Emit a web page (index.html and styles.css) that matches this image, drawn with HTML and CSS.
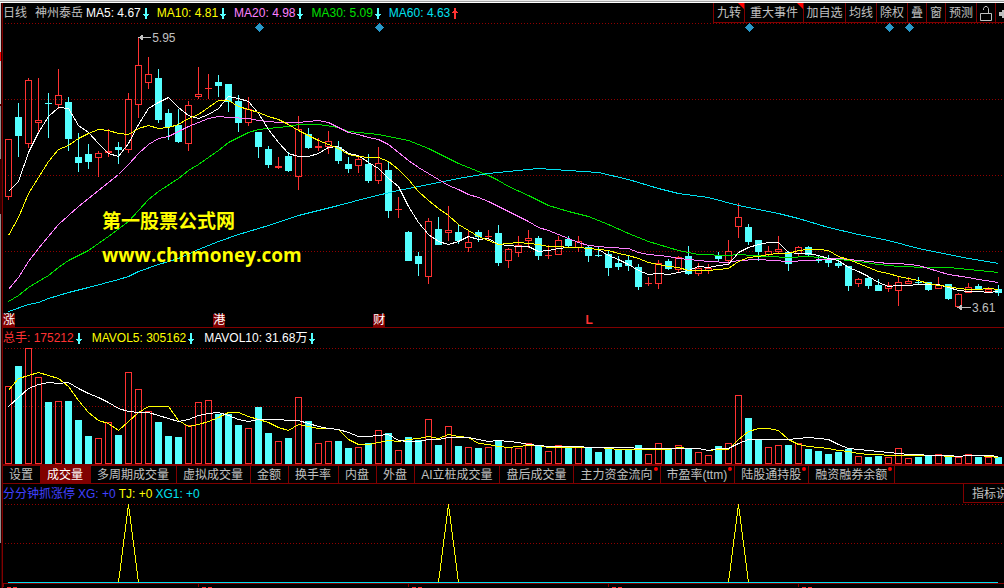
FILE: index.html
```
<!DOCTYPE html>
<html lang="zh-CN">
<head>
<meta charset="utf-8">
<title>神州泰岳 日线</title>
<link rel="stylesheet" href="styles.css">
</head>
<body>
<svg class="symbols" aria-hidden="true">
  <symbol id="down" viewBox="0 0 6 11"><path d="M2 0H4V6H6V7H5V8H4V11H2V8H1V7H0V6H2Z"/></symbol>
  <symbol id="up" viewBox="0 0 6 11"><path d="M2 11H4V5H6V4H5V3H4V0H2V3H1V4H0V5H2Z"/></symbol>
</svg>
<div class="top-strip"></div>
<div class="workspace">
  <div class="side-strip"></div>
  <main class="panels">
    <header class="bar">
      <span class="name">日线</span>
      <span class="name">神州泰岳</span>
      <div class="readings">
        <span class="reading white">MA5: 4.67<svg class="arrow"><use href="#down"/></svg></span>
        <span class="reading yellow">MA10: 4.81<svg class="arrow"><use href="#down"/></svg></span>
        <span class="reading violet">MA20: 4.98<svg class="arrow"><use href="#down"/></svg></span>
        <span class="reading green">MA30: 5.09<svg class="arrow"><use href="#down"/></svg></span>
        <span class="reading aqua">MA60: 4.63<svg class="arrow rise"><use href="#up"/></svg></span>
      </div>
      <nav class="tools">
        <button class="tool two flag">九转</button>
        <button class="tool four flag">重大事件</button>
        <button class="tool three">加自选</button>
        <button class="tool two">均线</button>
        <button class="tool two">除权</button>
        <button class="tool one">叠</button>
        <button class="tool one">窗</button>
        <button class="tool two">预测</button>
        <button class="tool one" aria-label="锁定"><svg class="lock" viewBox="0 0 12 15"><path d="M.5 7.500H11.500V14.500H.5Z M3.500 4V2.500L5 .5H7L8.500 2.500V7.500"/></svg></button>
        <button class="tool half" aria-label="展开"><svg class="more" viewBox="0 0 5 8"><path d="M0 2H3V0H5V8H3V6H0Z"/></svg></button>
      </nav>
    </header>

    <section class="plot price">
      <svg id="price" class="chart" viewBox="2 23 1002 304" preserveAspectRatio="none"></svg>
      <span class="mark high">5.95</span>
      <span class="mark low">3.61</span>
      <p class="watermark"><span>第一股票公式网</span><span>www.chnmoney.com</span></p>
      <span class="tag at-rise">涨</span>
      <span class="tag at-port">港</span>
      <span class="tag at-money">财</span>
      <span class="tag letter">L</span>
    </section>

    <header class="bar divided">
      <div class="readings wide">
        <span class="reading red">总手: 175212<svg class="arrow"><use href="#down"/></svg></span>
        <span class="reading yellow">MAVOL5: 305162<svg class="arrow"><use href="#down"/></svg></span>
        <span class="reading white">MAVOL10: 31.68万<svg class="arrow"><use href="#down"/></svg></span>
      </div>
    </header>
    <section class="plot volume">
      <svg id="volume" class="chart" viewBox="2 348 1002 116" preserveAspectRatio="none"></svg>
    </section>

    <nav class="tabs">
      <button class="tab">设置</button>
      <button class="tab active">成交量</button>
      <button class="tab">多周期成交量</button>
      <button class="tab">虚拟成交量</button>
      <button class="tab">金额</button>
      <button class="tab">换手率</button>
      <button class="tab">内盘</button>
      <button class="tab">外盘</button>
      <button class="tab">AI立桩成交量</button>
      <button class="tab">盘后成交量</button>
      <button class="tab dot">主力资金流向</button>
      <button class="tab dot">市盈率(ttm)</button>
      <button class="tab dot">陆股通持股</button>
      <button class="tab dot">融资融券余额</button>
    </nav>

    <header class="bar">
      <div class="signals">
        <span class="blue">分分钟抓涨停</span>
        <span class="blue">XG: +0</span>
        <span class="yellow">TJ: +0</span>
        <span class="aqua">XG1: +0</span>
      </div>
      <button class="help">指标说明</button>
    </header>
    <section class="plot signal">
      <svg id="signal" class="chart" viewBox="2 504 1002 84" preserveAspectRatio="none"></svg>
    </section>
  </main>
</div>
<script src="script.js"></script>
</body>
</html>
```

FILE: styles.css
```
* { box-sizing: border-box; }

body {
  margin: 0;
  height: 100vh;
  display: flex;
  flex-direction: column;
  overflow: hidden;
  background: #000;
  color: #c0c0c0;
  font: 12px/19px "Liberation Sans", "Noto Sans CJK SC", sans-serif;
  white-space: nowrap;
}

button {
  margin: 0;
  padding: 0;
  border: 0;
  background: none;
  color: inherit;
  font: inherit;
  white-space: nowrap;
}

.symbols { display: none; }

.top-strip {
  flex: none;
  height: 3px;
  background: linear-gradient(#e8e8e8 1px, #a0a0a0 1px 2px, #fff 2px);
}

.workspace { flex: 1; display: flex; min-height: 0; }

.side-strip {
  flex: none;
  width: 2px;
  border-right: 1px solid #300000;
  background: linear-gradient(#c8c8c8 49px, #f00 49px 58px, #c8c8c8 58px 101px, #600000 101px 103px, #909090 103px 156px, #300000 156px 211px, #909090 211px 540px, #000 540px);
}

.panels {
  flex: 1;
  min-width: 0;
  display: flex;
  flex-direction: column;
}

.bar {
  flex: none;
  display: flex;
  height: 20px;
  border-left: 1px solid #800000;
}

.divided { height: 21px; border-top: 1px solid #800000; }

.name { margin-right: 8px; padding-top: 1px; }
.name + .readings { margin-left: -5px; }

.readings { display: flex; gap: 8px; }
.wide { gap: 10px; }
.reading { display: flex; align-items: center; gap: 2px; }

.arrow { width: 6px; height: 11px; fill: #54ffff; }
.rise { fill: #ff3232; }

.white { color: #fff; }
.yellow { color: #ff0; }
.violet { color: #ff80ff; }
.green { color: #00e000; }
.aqua { color: #00e0f0; }
.red { color: #ff3232; }
.blue { color: #4040ff; }

.tools { display: flex; margin-left: auto; border-bottom: 1px solid #800000; }
.tool {
  position: relative;
  display: flex;
  align-items: center;
  justify-content: center;
  padding-top: 2px;
  border-left: 1px solid #800000;
}
.half { width: 9px; justify-content: flex-end; }
.one { width: 19px; }
.two { width: 31px; }
.three { width: 42px; }
.four { width: 59px; }

.flag::after {
  content: "";
  position: absolute;
  top: 0;
  right: 0;
  border-top: 6px solid #f00;
  border-left: 6px solid transparent;
}

.lock { width: 12px; height: 15px; fill: none; stroke: #c0c0c0; }
.more { width: 5px; height: 8px; fill: #c0c0c0; }

.plot { position: relative; min-height: 0; border-left: 1px solid #800000; }
.price { flex: 304 1 0; }
.volume { flex: 116 1 0; }
.signal { flex: 84 1 0; }

.chart {
  position: absolute;
  inset: 0 0 0 -1px;
  width: calc(100% + 1px);
  height: 100%;
  shape-rendering: crispEdges;
}

.chart polyline { fill: none; }
.grid { stroke: #900000; stroke-dasharray: 1 2; }
.up { stroke: #ff3232; fill: none; }
.down { fill: #54ffff; }
.diamond { fill: #2898c8; }
.pointer { stroke: #c0c0c0; fill: #c0c0c0; }
.axis { stroke: #800000; }
.date { fill: #ff3232; }
.ma-white { stroke: #fff; }
.ma-yellow { stroke: #ff0; }
.ma-violet { stroke: #ff80ff; }
.ma-green { stroke: #00e000; }
.ma-aqua { stroke: #00e0f0; }

.mark { position: absolute; line-height: 14px; }
.high { left: 14.900%; top: 2.700%; }
.low { left: 96.800%; top: 91.500%; }

.watermark {
  position: absolute;
  left: 9.900%;
  top: 59.500%;
  display: grid;
  margin: 0;
  color: #ff0;
  font: bold 19px/34px "Open Sans", "Noto Sans CJK SC", sans-serif;
}

.tag {
  position: absolute;
  bottom: 0;
  background: #800000;
  color: #fff;
  line-height: 13px;
}
.at-rise { left: 0; }
.at-port { left: 21%; }
.at-money { left: 37%; }
.letter { left: 58.200%; background: none; color: #ff3232; font-weight: bold; }

.tabs {
  flex: none;
  display: flex;
  height: 20px;
  border: solid #800000;
  border-width: 2px 0 1px 1px;
  line-height: 15px;
}
.tab {
  position: relative;
  padding: 2px 7px 0 6px;
  border-right: 1px solid #800000;
}
.active { background: #800000; color: #fff; }
.dot::after {
  content: "";
  position: absolute;
  top: 1px;
  right: 2px;
  width: 4px;
  height: 4px;
  border-radius: 50%;
  background: #f00;
}

.signals { display: flex; gap: 3px; padding-top: 1px; }
.help {
  width: 41px;
  height: 19px;
  margin-left: auto;
  padding: 1px 0 0 8px;
  overflow: hidden;
  border: solid #800000;
  border-width: 0 0 1px 1px;
  text-align: left;
}
```

FILE: script.js
```
const STEP = 10;
const FIRST = 8;
const NS = "http://www.w3.org/2000/svg";

function add(svg, tag, cls, attrs) {
  const el = document.createElementNS(NS, tag);
  el.setAttribute("class", cls);
  for (const key in attrs) el.setAttribute(key, attrs[key]);
  svg.appendChild(el);
}

// Each candle: direction, high, body top, body bottom, low, volume top.
const candles = `r 139 139 196 200 386|c 103 117 136 157 366|r 78 80 143 148 348|r 78 120 122 134 377|c 93 103 104 138 402
r 69 95 104 109 401|c 97 102 139 151 401|c 133 157 163 172 420|c 144 154 162 169 436|r 151 153 157 177 438
r 129 151 152 157 422|c 142 147 150 164 435|r 93 99 149 153 372|r 37 65 104 118 389|r 57 74 82 89 411
c 69 78 120 123 422|c 109 113 127 140 436|c 109 125 142 143 437|r 101 105 143 151 425|r 67 94 96 99 402
r 74 88 88 99 400|c 75 82 86 97 414|c 84 84 102 112 414|c 95 101 123 132 425|r 97 109 122 126 428
c 132 132 147 158 407|c 146 149 165 168 433|r 157 166 167 169 441|c 152 156 171 172 438|r 116 129 176 190 397
c 128 134 148 149 421|r 138 146 147 151 443|r 131 141 146 154 441|c 141 147 161 164 441|c 157 164 169 173 448
r 157 159 165 173 447|c 154 164 181 183 443|r 147 163 180 184 430|c 161 170 211 218 433|r 197 209 209 218 450
c 231 232 261 261 437|c 252 256 264 276 440|r 218 221 276 284 419|c 217 229 245 245 445|r 206 230 232 241 426
c 224 232 241 244 446|r 230 242 247 252 447|c 230 232 237 242 448|r 230 236 236 241 447|c 225 233 263 266 441
r 248 249 260 268 447|r 236 245 252 257 448|r 230 238 240 248 443|c 236 238 256 260 446|r 245 255 255 259 451
r 236 240 254 255 445|c 236 239 246 248 448|r 236 241 247 252 447|c 245 247 256 262 447|c 247 255 256 257 452
c 251 254 268 276 448|c 256 263 267 270 449|c 255 260 266 271 449|c 264 267 287 290 445|r 277 283 283 286 454
r 260 263 283 289 443|c 259 261 269 270 449|r 256 257 269 272 445|c 246 256 274 275 448|r 263 268 273 276 452
r 264 268 270 274 455|c 252 256 259 261 446|r 240 251 260 264 443|r 203 217 226 238 395|c 224 227 242 245 418
c 240 240 252 261 440|r 246 251 254 257 447|r 236 249 251 253 445|c 251 252 264 271 445|r 246 247 253 256 443
c 246 247 255 256 449|c 256 260 261 263 451|c 255 259 263 267 454|c 260 263 266 268 452|c 266 266 286 291 449
r 278 279 283 287 456|c 276 278 286 289 457|c 279 285 291 291 456|r 282 285 288 292 457|r 276 282 290 306 448
r 277 281 283 284 458|c 277 282 283 284 457|c 282 282 290 291 456|r 277 285 288 289 454|c 284 284 299 300 457
r 293 294 306 307 457|r 283 287 292 293 454|c 284 286 290 290 457|r 287 289 291 292 457|c 285 289 293 296 457`
  .split(/[|\n]/).map(row => row.split(" ").map((v, i) => i ? +v : v));

// One value for every trading day.
const daily = text => text.split(" ").map((y, i) => [FIRST + i * STEP, +y]);
// Explicit x,y pairs for slowly changing averages.
const pairs = text => text.split(" ").map(p => p.split(",").map(Number));

function line(svg, cls, points) {
  add(svg, "polyline", cls, { points: points.map(([x, y]) => `${x + .5},${y + .5}`).join(" ") });
}

function rule(svg, cls, x1, y1, x2, y2) {
  add(svg, "line", cls, { x1, y1, x2, y2 });
}

function bar(svg, dir, x, top, bottom) {
  if (dir === "c") add(svg, "rect", "down", { x: x - 3, y: top, width: 7, height: Math.max(1, bottom - top) });
  else add(svg, "rect", "up", { x: x - 2.5, y: top + .5, width: 6, height: Math.max(.01, bottom - top) });
}

const price = document.getElementById("price");
[23, 99, 175, 251].forEach(y => rule(price, "grid", 5, y + .5, 1004, y + .5));
candles.forEach(([dir, high, top, bottom, low], i) => {
  const x = FIRST + i * STEP;
  if (dir === "c") add(price, "rect", "down", { x, y: high, width: 1, height: low - high });
  else {
    if (top > high) rule(price, "up", x + .5, high, x + .5, top);
    if (low > bottom) rule(price, "up", x + .5, bottom, x + .5, low);
  }
  bar(price, dir, x, top, bottom);
});

line(price, "ma-aqua", pairs("8,311 28,304 38,302 48,298 68,292 88,287 118,279 128,276 138,271 158,264 178,258 198,249 218,241 238,234 268,225 298,215 318,210 338,205 368,197 398,190 428,184 458,178 488,173 518,170 538,168 568,170 598,172 628,179 658,188 678,193 708,197 738,205 778,213 798,218 828,227 858,234 888,240 918,248 938,252 968,258 998,263"));
line(price, "ma-green", pairs("8,301 18,295 28,287 48,275 58,267 68,260 88,250 108,236 128,221 138,210 148,199 158,191 178,178 188,170 198,164 208,157 218,150 228,142 238,137 248,132 258,129 268,128 288,126 298,124 318,124 338,127 348,131 358,132 378,134 388,136 398,138 408,140 428,148 438,153 448,158 458,163 468,167 478,171 488,175 498,180 508,186 528,195 548,205 568,211 588,216 608,224 628,233 648,241 668,247 678,250 698,254 728,255 738,254 768,256 788,257 808,256 828,258 858,261 878,264 898,266 928,267 948,267 968,269 988,271 998,272"));
line(price, "ma-violet", pairs("8,289 18,277 28,261 38,248 48,236 58,224 68,215 78,206 88,198 98,190 108,182 118,174 128,164 138,153 148,144 158,138 168,136 178,131 188,126 198,122 208,118 218,116 228,117 248,118 258,120 268,121 278,122 298,122 308,121 318,120 328,122 338,127 348,132 358,134 368,137 378,139 388,144 398,152 408,160 418,167 428,173 438,179 448,185 458,189 468,194 478,197 488,201 498,206 508,211 518,216 528,221 538,227 548,230 558,234 568,238 578,242 588,245 598,246 608,247 628,248 638,252 648,254 658,255 668,256 678,258 688,259 708,261 728,262 738,260 758,259 788,261 808,260 838,258 858,260 868,261 888,263 898,263 918,265 928,268 948,274 968,277 978,279 998,282"));
line(price, "ma-white", daily("191 181 152 132 116 107 108 125 132 143 153 156 143 124 108 102 97 107 115 118 114 108 96 98 101 113 129 142 153 156 156 153 147 146 153 155 162 168 178 186 206 222 234 241 244 241 236 239 238 244 245 246 246 251 250 248 247 247 248 249 255 259 264 270 274 273 274 272 270 266 267 265 264 252 247 244 242 242 252 253 253 255 258 260 267 271 276 282 286 285 285 284 284 284 287 290 291 291 292 291"));
line(price, "ma-yellow", daily("235 217 193 177 161 149 145 138 133 129 130 133 134 128 125 128 127 124 118 114 107 100 100 106 109 112 116 119 124 130 135 140 144 148 154 156 157 157 161 169 179 191 200 208 215 224 230 236 240 244 243 242 243 244 246 246 247 247 248 249 250 253 255 258 262 264 266 267 270 270 270 269 268 261 257 256 254 253 253 250 249 249 250 256 259 263 267 271 273 276 278 280 283 285 286 288 289 289 288 289"));

[259, 379, 749, 889, 909].forEach(x =>
  add(price, "path", "diamond", { d: `M${x + .5} 23 l4.500 4.500 l-4.500 4.500 l-4.500 -4.500Z` }));
add(price, "path", "pointer", { d: "M151 37.500H139L142 35.500V39.500L139 37.500" });
add(price, "path", "pointer", { d: "M971 307.500H958L961 305.500V309.500L958 307.500" });

const volume = document.getElementById("volume");
[348, 406].forEach(y => rule(volume, "grid", 5, y + .5, 1004, y + .5));
candles.forEach((c, i) => bar(volume, c[0], FIRST + i * STEP, c[5], c[0] === "c" ? 464 : 463));
line(volume, "ma-yellow", daily("390 378 375 372 375 378 386 400 412 420 423 430 421 412 406 406 406 420 426 424 421 417 412 412 416 419 422 427 430 424 426 428 428 429 439 444 444 442 440 441 439 438 436 438 434 436 437 443 444 446 447 446 445 445 447 447 447 447 447 447 448 449 449 449 449 449 449 447 448 448 450 449 449 439 431 428 428 430 439 444 446 447 448 450 451 453 454 454 455 455 455 455 455 455 456 456 455 455 456 457"));
line(volume, "ma-white", daily("406 397 388 384 382 383 382 388 393 397 402 408 411 412 412 415 418 421 419 415 413 412 415 419 421 419 419 419 420 420 423 426 428 429 432 436 436 435 434 440 441 441 439 439 437 437 437 439 441 440 441 442 444 445 446 446 446 446 447 447 447 447 447 448 448 448 448 448 448 448 450 448 448 443 439 439 439 439 439 438 437 438 439 444 448 449 450 451 452 453 454 454 455 455 455 456 455 455 455 456"));

const signal = document.getElementById("signal");
[504, 543].forEach(y => rule(signal, "grid", 5, y + .5, 1004, y + .5));
[128, 448, 738].forEach(x => line(signal, "ma-yellow", [[x - 10, 582], [x, 504], [x + 10, 582]]));
rule(signal, "axis", 2, 583.5, 1004, 583.5);
rule(signal, "ma-aqua", 8, 582.5, 998, 582.5);
[3, 198, 408, 608, 798].forEach(x => {
  rule(signal, "axis", x + .5, 584, x + .5, 587);
  [4, 10].forEach(dx => add(signal, "rect", "date", { x: x + dx, y: 587, width: 4, height: 1 }));
});
```
